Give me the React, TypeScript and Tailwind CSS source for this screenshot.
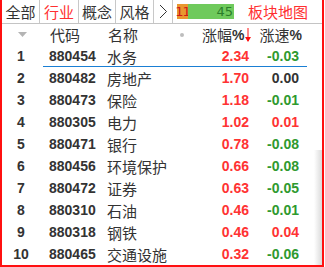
import React from 'react';

const ROWS = [
  { code: '880454', name: '水务', chg: '2.34', spd: '-0.03' },
  { code: '880482', name: '房地产', chg: '1.70', spd: '0.00' },
  { code: '880473', name: '保险', chg: '1.18', spd: '-0.01' },
  { code: '880305', name: '电力', chg: '1.02', spd: '0.01' },
  { code: '880471', name: '银行', chg: '0.78', spd: '-0.08' },
  { code: '880456', name: '环境保护', chg: '0.66', spd: '-0.08' },
  { code: '880472', name: '证券', chg: '0.63', spd: '-0.05' },
  { code: '880310', name: '石油', chg: '0.46', spd: '-0.01' },
  { code: '880318', name: '钢铁', chg: '0.46', spd: '0.04' },
  { code: '880465', name: '交通设施', chg: '0.32', spd: '-0.06' },
];

const TABS = [
  { label: '全部', w: 'w-[38px]' },
  { label: '行业', w: 'w-[39px]', active: true },
  { label: '概念', w: 'w-[37px]' },
  { label: '风格', w: 'w-[38px]' },
];

const cjk = "font-['Noto_Sans_CJK_SC','Noto_Sans',sans-serif]";
const num = "font-['Liberation_Sans',Arial,sans-serif] font-bold";

function speedColor(v: string) {
  if (v.startsWith('-')) return 'text-[#2f9a2f]';
  if (v === '0.00') return 'text-[#333]';
  return 'text-[#ff3333]';
}

export default function App() {
  return (
    <div className={`relative w-[324px] h-[267px] bg-white border-x-2 border-b-2 border-[#ff1010] overflow-hidden ${cjk}`}>
      {/* Tab bar */}
      <div className="flex items-center h-[24px] border-b border-[#c4c4c4]">
        {TABS.map((t) => (
          <div
            key={t.label}
            className={`${t.w} h-full flex items-center justify-center border-r border-[#c8c8c8] text-[15px] leading-none ${
              t.active ? 'text-[#ff3030]' : 'text-[#333]'
            }`}
          >
            {t.label}
          </div>
        ))}
        <div className="w-[19px] h-full flex items-center justify-center border-r border-[#c8c8c8]">
          <svg width="9" height="15" viewBox="0 0 9 15">
            <polyline points="1,1 7.5,7.5 1,14" fill="none" stroke="#333" strokeWidth="1" />
          </svg>
        </div>
        <div className="ml-[4px] flex h-[15px] w-[57px] text-[13px] leading-none font-['DejaVu_Sans',sans-serif]">
          <div className="w-[11px] bg-[#e9972f] flex items-center justify-center text-[#d01818] tracking-[-1px]">11</div>
          <div className="flex-1 bg-[#6fca5c] flex items-center justify-end pr-[1px] text-[#2a7d2a]">45</div>
        </div>
        <div className="ml-[14px] text-[15px] leading-none text-[#ff3030]">板块地图</div>
      </div>

      {/* Header */}
      <div className="flex items-center h-[21px] text-[15px] leading-none text-[#333]">
        <div className="w-[38px] flex justify-center">
          <svg width="9" height="5" viewBox="0 0 9 5" className="ml-[3px]">
            <polygon points="0,0 9,0 4.5,5" fill="#b4b4b4" />
          </svg>
        </div>
        <div className="w-[68px] pl-[10px]">代码</div>
        <div className="w-[94px] flex items-center">
          <span>名称</span>
          <span className="ml-[42px] w-[4px] h-[4px] rounded-full bg-[#bdbdbd]" />
        </div>
        <div className="flex items-center">
          <span>涨幅</span>
          <span className={`${num} text-[14px]`}>%</span>
          <svg width="6" height="16" viewBox="0 0 6 16" className="ml-[1px]">
            <line x1="3" y1="1" x2="3" y2="14" stroke="#ff1010" strokeWidth="1" />
            <polygon points="0,10 6,10 3,15" fill="#ff1010" />
          </svg>
        </div>
        <div className="ml-[8px] flex items-center">
          <span>涨速</span>
          <span className={`${num} text-[14px]`}>%</span>
        </div>
      </div>

      {/* Rows */}
      {ROWS.map((r, i) => (
        <div key={r.code} className="flex items-center h-[22px] leading-none">
          <div className={`w-[38px] text-center text-[14px] text-[#333] ${num}`}>{i + 1}</div>
          <div className="w-[265px] flex items-center h-full relative">
            <div className={`w-[67px] pl-[9px] text-[14px] text-[#333] ${num}`}>{r.code}</div>
            <div className="w-[93px] text-[15px] text-[#333]">{r.name}</div>
            <div className={`w-[50px] text-right pr-[1px] text-[14px] text-[#ff3333] ${num}`}>{r.chg}</div>
            <div className={`w-[50px] text-right pr-[1px] text-[14px] ${num} ${speedColor(r.spd)}`}>{r.spd}</div>
            {i === 0 && <div className="absolute left-[3px] right-[-2px] bottom-0 h-px bg-[#1a7fd4]" />}
          </div>
        </div>
      ))}

      {/* right edge shading */}
      <div className="absolute right-0 top-[150px] bottom-0 w-[8px] bg-gradient-to-r from-transparent to-[#dadada]" />
    </div>
  );
}
